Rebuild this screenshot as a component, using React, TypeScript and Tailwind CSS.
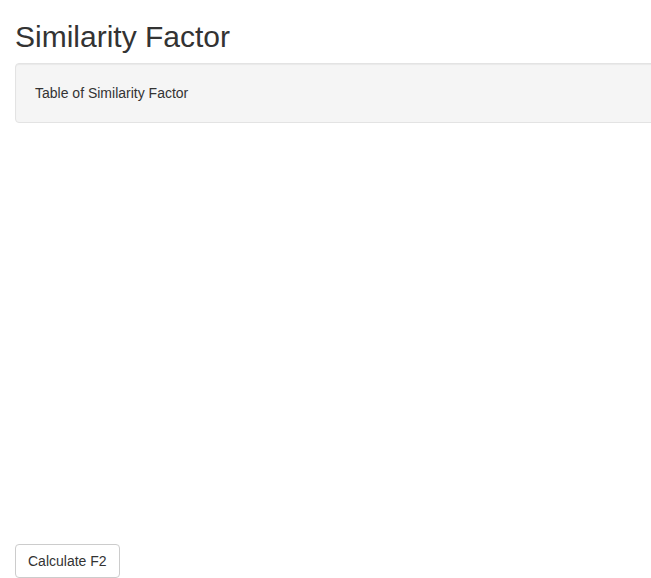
export default function App() {
  return (
    <div className="min-h-[578px] overflow-hidden bg-white px-[15px] font-['Liberation_Sans',Arial,sans-serif] text-[14px] leading-[20px] text-[#333]">
      <h2 className="mt-[20px] mb-[10px] text-[30px] leading-[33px] font-normal">Similarity Factor</h2>

      {/* Well panel, wider than the viewport */}
      <div className="mb-[20px] w-[700px] rounded-[4px] border border-[#e3e3e3] bg-[#f5f5f5] p-[19px] shadow-[inset_0_1px_1px_rgba(0,0,0,0.05)]">
        <span>Table of Similarity Factor</span>
      </div>

      {/* empty plot output */}
      <div className="h-[401px]" />

      <button className="rounded-[4px] border border-[#ccc] bg-white px-[12px] py-[6px] text-[14px] leading-[20px] text-[#333]">
        Calculate F2
      </button>
    </div>
  );
}
